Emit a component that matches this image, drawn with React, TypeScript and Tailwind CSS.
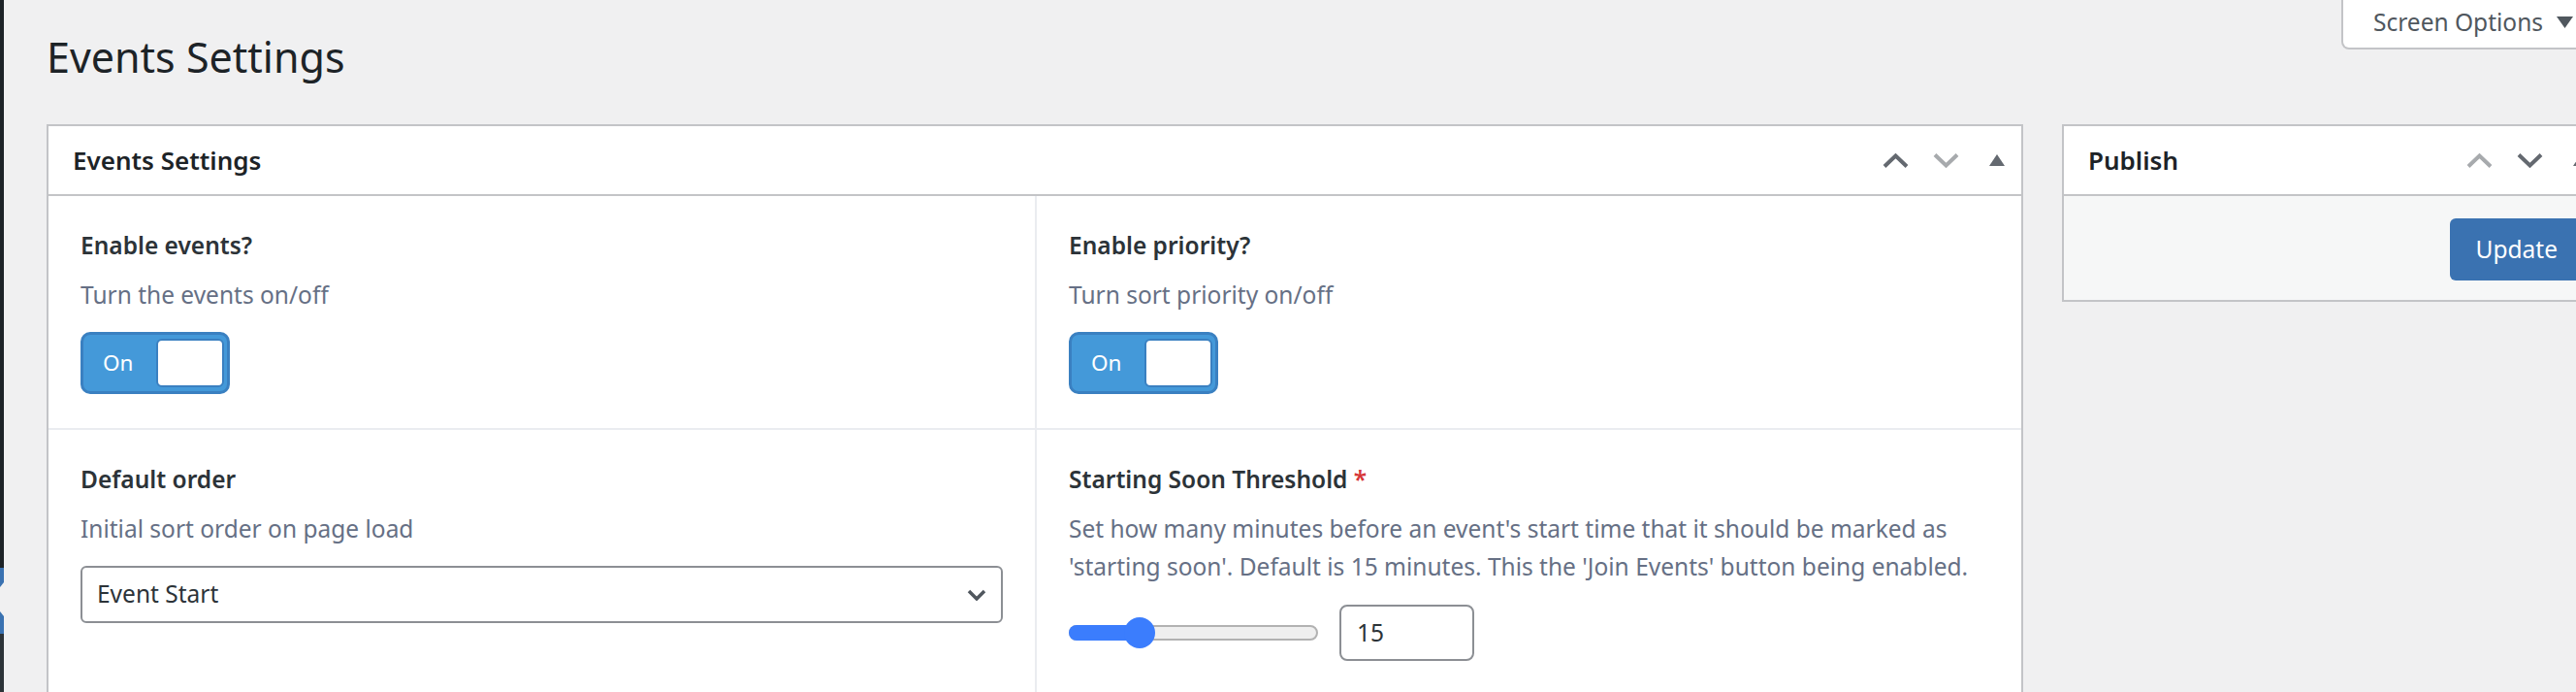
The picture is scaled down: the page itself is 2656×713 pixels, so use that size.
import React from "react";

const font = { fontFamily: '"Noto Sans", "Open Sans", sans-serif' };

function Chevron({ dir, color }: { dir: "up" | "down"; color: string }) {
  return (
    <svg width="27" height="15" viewBox="0 0 27 15">
      <polyline
        points={dir === "up" ? "2,13.5 13.5,2.5 25,13.5" : "2,1.5 13.5,12.5 25,1.5"}
        fill="none"
        stroke={color}
        strokeWidth="4"
      />
    </svg>
  );
}

function Handles({ upColor, downColor }: { upColor: string; downColor: string }) {
  return (
    <div className="flex items-center">
      <Chevron dir="up" color={upColor} />
      <div className="ml-[25px] flex">
        <Chevron dir="down" color={downColor} />
      </div>
      <svg className="ml-[31px]" width="16" height="12" viewBox="0 0 16 12">
        <polygon points="8,0 16,12 0,12" fill="#646970" />
      </svg>
    </div>
  );
}

function Toggle() {
  return (
    <div className="w-[154px] h-[64px] rounded-[10px] border-[3px] border-[#3a80c1] bg-[#4499d9] flex items-center justify-between pl-[20px] pr-[3px]">
      <span className="text-white text-[22.5px] leading-none">On</span>
      <div className="w-[70px] h-[50px] bg-white rounded-[6px] border-2 border-[#3a80c1]" />
    </div>
  );
}

function Label({ children }: { children: React.ReactNode }) {
  return <div className="text-[24.5px] leading-[36px] font-semibold text-[#2c3338]">{children}</div>;
}

function Desc({ children }: { children: React.ReactNode }) {
  return <div className="mt-[13px] text-[24.5px] leading-[39px] text-[#667085]">{children}</div>;
}

export default function App() {
  return (
    <div className="w-[2656px] h-[713px] overflow-hidden bg-[#f0f0f1] flex" style={font}>
      {/* admin sidebar edge */}
      <div className="w-[4px] shrink-0 flex flex-col">
        <div className="h-[585px] bg-[#1d2327]" />
        <svg width="4" height="68" viewBox="0 0 4 68" className="block">
          <rect x="0" y="0" width="4" height="68" fill="#3a72b1" />
          <polygon points="4,15 0,20 0,45 4,50" fill="#f0f0f1" />
        </svg>
        <div className="flex-1 bg-[#2c3338]" />
      </div>

      <div className="w-[2700px] shrink-0 pl-[44px] pr-[16px] flex flex-col">
        {/* title row */}
        <div className="flex justify-between items-start">
          <h1 className="mt-[29px] text-[43px] leading-[60px] font-normal text-[#1d2327]">Events Settings</h1>
          <div className="w-[274px] h-[51px] bg-white border-2 border-t-0 border-[#c3c4c7] rounded-bl-[8px] rounded-br-[8px] flex items-center pl-[31px] pb-[4px] text-[#50575e] text-[24.5px]">
            <span className="leading-[36px]">Screen Options</span>
            <svg className="ml-[14px]" width="17" height="12" viewBox="0 0 17 12">
              <polygon points="0,0 17,0 8.5,12" fill="#50575e" />
            </svg>
          </div>
        </div>

        {/* columns */}
        <div className="mt-[39px] flex items-start gap-[40px]">
          {/* main postbox */}
          <div className="w-[2038px] shrink-0 bg-white border-2 border-[#c3c4c7]">
            <div className="h-[72px] flex items-center justify-between pl-[25px] pr-[17px] border-b-2 border-[#c3c4c7]">
              <h2 className="text-[26px] font-semibold text-[#1d2327] leading-[36px]">Events Settings</h2>
              <Handles upColor="#646970" downColor="#a7aaad" />
            </div>
            <div className="grid grid-cols-[1019px_1fr]">
              <div className="border-r-2 border-b-2 border-[#eaecf0] pt-[33px] pb-[35px] px-[33px]">
                <Label>Enable events?</Label>
                <Desc>Turn the events on/off</Desc>
                <div className="mt-[19px]">
                  <Toggle />
                </div>
              </div>
              <div className="border-b-2 border-[#eaecf0] pt-[33px] pb-[35px] px-[33px]">
                <Label>Enable priority?</Label>
                <Desc>Turn sort priority on/off</Desc>
                <div className="mt-[19px]">
                  <Toggle />
                </div>
              </div>
              <div className="border-r-2 border-[#eaecf0] pt-[33px] pb-[60px] px-[33px]">
                <Label>Default order</Label>
                <Desc>Initial sort order on page load</Desc>
                <div className="mt-[19px] h-[59px] border-2 border-[#8c8f94] rounded-[6px] flex items-center justify-between pl-[15px] pr-[15px] text-[24.5px] text-[#2c3338]">
                  <span>Event Start</span>
                  <svg width="20" height="12" viewBox="0 0 20 12">
                    <polyline points="2,2 10,10 18,2" fill="none" stroke="#50575e" strokeWidth="3.5" />
                  </svg>
                </div>
              </div>
              <div className="pt-[33px] pb-[60px] px-[33px]">
                <Label>
                  Starting Soon Threshold <span className="text-[#d63638]">*</span>
                </Label>
                <Desc>
                  Set how many minutes before an event's start time that it should be marked as
                  <br />
                  'starting soon'. Default is 15 minutes. This the 'Join Events' button being enabled.
                </Desc>
                <div className="mt-[20px] flex items-center gap-[22px]">
                  <div className="relative w-[257px] h-[16px] rounded-full bg-[#efefef] border-2 border-[#b2b2b2]">
                    <div className="absolute left-[-2px] top-[-2px] h-[16px] w-[76px] rounded-full bg-[#3b7dfd]" />
                    <div className="absolute left-[55px] top-[-10px] w-[32px] h-[32px] rounded-full bg-[#3b7dfd]" />
                  </div>
                  <div className="w-[139px] h-[58px] border-2 border-[#8c8f94] rounded-[8px] flex items-center pl-[16px] text-[24.5px] text-[#2c3338]">
                    15
                  </div>
                </div>
              </div>
            </div>
          </div>

          {/* publish postbox */}
          <div className="w-[562px] shrink-0 bg-white border-2 border-[#c3c4c7]">
            <div className="h-[72px] flex items-center justify-between pl-[25px] pr-[17px] border-b-2 border-[#c3c4c7]">
              <h2 className="text-[26px] font-semibold text-[#1d2327] leading-[36px]">Publish</h2>
              <Handles upColor="#a7aaad" downColor="#646970" />
            </div>
            <div className="bg-[#f6f7f7] flex justify-end pt-[23px] pb-[20px] pr-[22px]">
              <div className="h-[64px] px-[27px] rounded-[6px] bg-[#3a72b1] text-white text-[24.5px] flex items-center">
                Update
              </div>
            </div>
          </div>
        </div>
      </div>
    </div>
  );
}
